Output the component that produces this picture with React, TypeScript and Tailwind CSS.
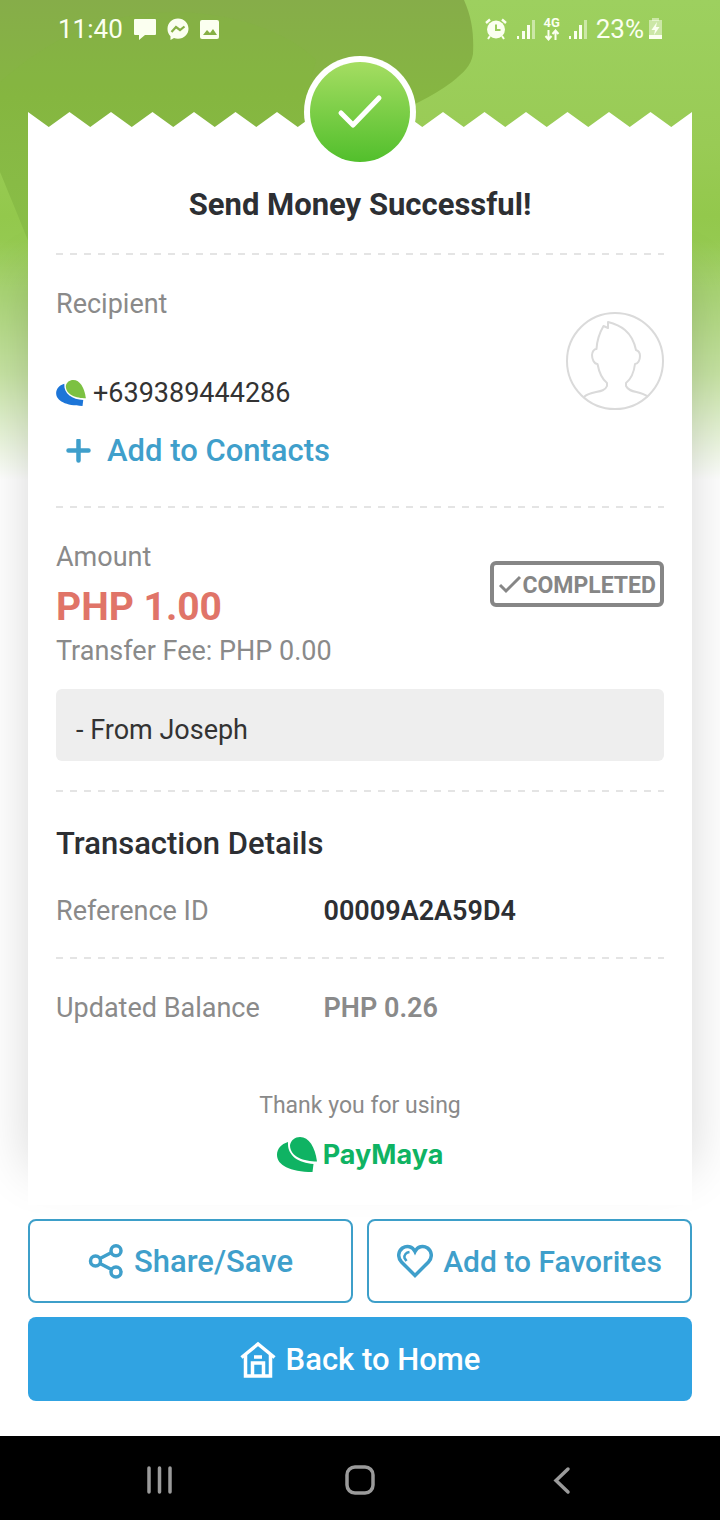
import * as React from 'react';

function Backdrop() {
  return (
    <svg
      className="absolute inset-x-0 top-0 h-[480px] w-full"
      viewBox="0 0 720 480"
      preserveAspectRatio="none"
      aria-hidden="true"
    >
      <defs>
        <linearGradient id="base" x1="0" y1="0" x2="0" y2="1">
          <stop offset="0" stopColor="#9dd05f" />
          <stop offset="0.3" stopColor="#99cb55" />
          <stop offset="0.45" stopColor="#93c84c" />
          <stop offset="0.6" stopColor="#98cc58" />
        </linearGradient>
        <linearGradient id="leaf" x1="0" y1="0" x2="0" y2="1">
          <stop offset="0" stopColor="#86ad49" />
          <stop offset="0.3" stopColor="#86b642" />
          <stop offset="1" stopColor="#8bc34a" />
        </linearGradient>
        <linearGradient id="fade" x1="0" y1="0" x2="0" y2="1">
          <stop offset="0.5" stopColor="#fff" stopOpacity="0" />
          <stop offset="0.78" stopColor="#fff" stopOpacity="0.45" />
          <stop offset="1" stopColor="#fff" />
        </linearGradient>
      </defs>
      <rect width="720" height="480" fill="url(#base)" />
      <path d="M0 0H464C472 18 474 34 473 54C471 66 464 72 452 82C430 98 410 106 392 116L340 320H60C40 270 22 225 0 172Z" fill="url(#leaf)" />
      <path d="M0 82C60 30 110 12 180 12C240 14 290 34 316 60L300 120H0Z" fill="#82b83a" opacity="0.2" />
      <rect width="720" height="480" fill="url(#fade)" />
    </svg>
  );
}

function StatusBar() {
  return (
    <header className="flex h-[58px] items-center justify-between pl-[58px] pr-[57px] text-[26px] text-[#fbfff0]">
      <div className="flex items-center gap-[10px]">
        <span>11:40</span>
        <svg width="24" height="24" viewBox="0 0 24 24" fill="currentColor" aria-hidden="true">
          <path d="M2 2h20a1 1 0 0 1 1 1v14a1 1 0 0 1-1 1H12l-6 5v-5H2a1 1 0 0 1-1-1V3a1 1 0 0 1 1-1z" />
        </svg>
        <svg width="22" height="24" viewBox="0 0 22 24" aria-hidden="true">
          <path d="M11 1.500C5 1.500 0.500 6 0.500 12c0 3 1.200 5.500 3 7.300V23l3.500-2c1.100.4 2.500.7 4 .7 6 0 10.500-4.300 10.500-9.900S17 1.500 11 1.500z" fill="currentColor" />
          <path d="M4.500 15L9 10l4 3 4.500-3.500" fill="none" stroke="#86b045" strokeWidth="2.200" />
        </svg>
        <svg width="22" height="24" viewBox="0 0 22 24" aria-hidden="true">
          <rect x="1" y="3" width="19" height="19" rx="2" fill="currentColor" />
          <path d="M4 18l4-5 3 3 3-4 4 6z" fill="#86b045" />
        </svg>
      </div>
      <div className="flex items-center gap-2">
        <svg width="24" height="24" viewBox="0 0 22 24" fill="none" aria-hidden="true">
          <path d="M1 6l4-3.500M21 6l-4-3.500" stroke="currentColor" strokeWidth="2.400" />
          <circle cx="11" cy="12.500" r="9" fill="currentColor" />
          <path d="M11 7.500v5.500h4.500" stroke="#9bcd5d" strokeWidth="2" />
          <path d="M5 19l-2 3M17 19l2 3" stroke="currentColor" strokeWidth="2" />
        </svg>
        <SignalBars />
        <span className="flex w-[16px] flex-col items-center">
          <span className="text-[13px] font-bold leading-[12px]">4G</span>
          <svg width="16" height="12" viewBox="0 0 16 12" fill="none" stroke="currentColor" strokeWidth="2" aria-hidden="true">
            <path d="M4.500 1v9M1.500 7l3 3.500 3-3.500M11.500 11V2M8.500 5l3-3.500 3 3.500" />
          </svg>
        </span>
        <SignalBars />
        <span className="flex items-center gap-1">
          23%
          <svg width="15" height="24" viewBox="0 0 15 24" aria-hidden="true">
            <rect x="4" y="1" width="7" height="3" fill="currentColor" opacity="0.5" />
            <rect x="1" y="3" width="13" height="19" fill="currentColor" opacity="0.5" />
            <rect x="1" y="18" width="13" height="4" fill="currentColor" />
            <path d="M9 5l-5.500 8H7l-1 5 5.500-8H8z" fill="currentColor" />
          </svg>
        </span>
      </div>
    </header>
  );
}

function SignalBars() {
  return (
    <svg width="20" height="24" viewBox="0 0 20 24" fill="currentColor" aria-hidden="true">
      <rect x="1" y="19" width="2" height="3" />
      <rect x="6" y="14" width="3" height="8" />
      <rect x="11" y="8" width="3" height="14" />
      <rect x="16" y="3" width="3" height="19" opacity="0.5" />
    </svg>
  );
}

function SuccessBadge() {
  return (
    <svg
      className="absolute left-1/2 -top-14 -translate-x-1/2"
      width="112"
      height="112"
      viewBox="0 0 112 112"
      role="img"
      aria-label="Success"
    >
      <defs>
        <linearGradient id="badge" x1="0" y1="0" x2="0" y2="1">
          <stop offset="0" stopColor="#a5dd62" />
          <stop offset="1" stopColor="#52bf2c" />
        </linearGradient>
      </defs>
      <circle cx="56" cy="56" r="56" fill="#fff" />
      <circle cx="56" cy="56" r="50" fill="url(#badge)" />
      <path d="M37 57l12 12 26-27" fill="none" stroke="#fff" strokeWidth="5" strokeLinecap="round" strokeLinejoin="round" />
    </svg>
  );
}

// Torn paper edge, 16 teeth wide
function TornEdge() {
  const teeth = Array.from({ length: 16 }, (_, i) => `L${i * 10 + 5} 15L${i * 10 + 10} 0`).join('');
  return (
    <svg className="block h-[15px] w-full" viewBox="0 0 160 15" preserveAspectRatio="none" aria-hidden="true">
      <path d={`M0 0${teeth}V16H0Z`} fill="#fff" />
    </svg>
  );
}

function Divider() {
  return (
    <div className="h-[2px] bg-[repeating-linear-gradient(90deg,#e4e4e4_0px,#e4e4e4_7px,transparent_7px,transparent_14px)]" />
  );
}

function Leaf({ back, front, className }: { back: string; front: string; className: string }) {
  return (
    <svg className={className} viewBox="0 0 40 35" aria-hidden="true">
      <path d="M11 5C4 7 0 12 0 18c0 10 13 17 35.500 17l1-8C22 26 10 19 11 5z" fill={back} />
      <path d="M13 8C14 3 18 0 23 0c9 0 15 10 17 24.500C27 24.500 13 20 13 8z" fill={front} />
    </svg>
  );
}

function Avatar() {
  return (
    <svg
      className="mt-[26px] size-[98px] shrink-0"
      viewBox="0 0 98 98"
      fill="none"
      stroke="#dadada"
      strokeWidth="2"
      strokeLinejoin="round"
      role="img"
      aria-label="Recipient photo"
    >
      <circle cx="49" cy="49" r="48" />
      <path d="M18 85C25 78 38 82 41 74V71C36 67 33 60 31.500 52C28 52 26 47 26 43C26 40 28 37 30.500 37C31 28 34 20 37.500 14L42 16V10C54 13 66 19 70 38C73 39 74 41 74 44C74 48 72 52 69 52C68 60 65 67 60 71V74C64 82 74 78 82 85" />
    </svg>
  );
}

const outlineButton =
  'flex h-[84px] items-center justify-center gap-[10px] rounded-lg border-2 border-[#3d9fc9] bg-white pt-[2px] font-medium text-[#3f9fcb]';

export default function App() {
  return (
    <div className="relative flex min-h-screen flex-col bg-white font-['Roboto',sans-serif] text-[27px] leading-[36px] text-[#8a8a8a]">
      <Backdrop />
      <div className="relative flex flex-1 flex-col">
        <StatusBar />

        <main className="flex flex-1 flex-col px-7 pt-[54px]">
          <section className="relative">
            <div className="absolute inset-x-0 bottom-9 top-40 shadow-[0_0_48px_rgba(0,0,0,0.16)]" />
            <div className="relative">
              <TornEdge />
              <div className="flex flex-col bg-white px-7 pb-[33px] pt-[60px]">
                <h1 className="mb-[30px] text-center text-[31px] font-bold text-[#2d2f33]">
                  Send Money Successful!
                </h1>
                <Divider />

                <div className="flex items-start justify-between pb-[37px] pt-[31px]">
                  <div>
                    <h2>Recipient</h2>
                    <p className="mt-[53px] flex items-center gap-[7px] text-[#333]">
                      <Leaf back="#1c75d8" front="#7cc142" className="h-[26px] w-[30px]" />
                      +639389444286
                    </p>
                    <button className="mt-[22px] flex items-center gap-4 pl-[10px] text-[31px] font-medium text-[#3f9fcb]">
                      <svg width="25" height="25" viewBox="0 0 25 25" stroke="currentColor" strokeWidth="4.500" strokeLinecap="round" aria-hidden="true">
                        <path d="M12.500 1.500v20M2.500 11.500h20" />
                      </svg>
                      Add to Contacts
                    </button>
                  </div>
                  <Avatar />
                </div>
                <Divider />

                <div className="flex items-start justify-between pt-[31px]">
                  <div>
                    <h2>Amount</h2>
                    <p className="mt-2 text-[39px] font-bold leading-[48px] text-[#e07468]">PHP 1.00</p>
                    <p className="mt-[2px]">Transfer Fee: PHP 0.00</p>
                  </div>
                  <div className="mt-[22px] flex h-[46px] items-center rounded-md border-4 border-[#868686] px-1 pt-[3px] text-[23px] font-bold text-[#868686]">
                    <svg width="24" height="24" viewBox="0 0 24 24" fill="none" stroke="currentColor" strokeWidth="3" aria-hidden="true">
                      <path d="M2 11l6 6L22 3" />
                    </svg>
                    COMPLETED
                  </div>
                </div>
                <p className="mb-[29px] mt-5 rounded-md bg-[#eee] px-5 pb-[13px] pt-[23px] text-[#333]">
                  - From Joseph
                </p>
                <Divider />

                <h2 className="mb-[31px] mt-[34px] text-[31px] font-medium text-[#2d2f33]">
                  Transaction Details
                </h2>
                <dl>
                  <div className="mb-7 grid grid-cols-[44%_1fr]">
                    <dt>Reference ID</dt>
                    <dd className="font-semibold text-[#2d2f33]">00009A2A59D4</dd>
                  </div>
                  <Divider />
                  <div className="mt-[31px] grid grid-cols-[44%_1fr]">
                    <dt>Updated Balance</dt>
                    <dd className="font-semibold">PHP 0.26</dd>
                  </div>
                </dl>

                <p className="mt-[62px] text-center text-[23px]">Thank you for using</p>
                <div className="mt-[13px] flex h-[35px] items-center justify-center gap-[6px] font-['Inter',sans-serif] text-[27px] font-bold text-[#0fb363]">
                  <Leaf back="currentColor" front="currentColor" className="h-[35px] w-[40px]" />
                  PayMaya
                </div>
              </div>
            </div>
            <SuccessBadge />
          </section>

          <div className="mb-[35px] mt-[14px] grid grid-cols-2 gap-[14px] text-[31px]">
            <button className={outlineButton}>
              <svg width="36" height="36" viewBox="0 0 36 36" fill="none" stroke="currentColor" strokeWidth="3.500" aria-hidden="true">
                <circle cx="7.500" cy="17" r="5" />
                <circle cx="28" cy="6.750" r="5" />
                <circle cx="28" cy="28" r="5" />
                <path d="M12 14.500L23.500 8.500M12 19.500l11.500 6" />
              </svg>
              Share/Save
            </button>
            <button className={outlineButton}>
              <svg width="36" height="36" viewBox="0 0 36 36" fill="none" stroke="currentColor" strokeWidth="3.500" aria-hidden="true">
                <path d="M18 31.500L4.500 18C0 13 1.500 7 5.500 4C10 1 15.500 2.500 18 7.500C20.500 2.500 26 1 30.500 4C34.500 7 36 13 31.500 18Z" />
                <path d="M12.500 8C9 8.500 7 11 7.500 14l2 3" strokeWidth="2.500" />
              </svg>
              <span className="text-[30px]">Add to Favorites</span>
            </button>
            <button className="col-span-2 flex h-[84px] items-center justify-center gap-[10px] rounded-lg bg-[#30a3e2] pt-[2px] font-medium text-white">
              <svg width="36" height="38" viewBox="0 0 36 38" fill="none" stroke="currentColor" strokeWidth="3.500" aria-hidden="true">
                <path d="M1.500 16.500L18 3l16.500 13.500" />
                <path d="M5.500 14v21h25V14M12.500 35V22h11v13M14 16h8" />
              </svg>
              Back to Home
            </button>
          </div>
        </main>

        <nav className="grid h-[84px] grid-cols-3 bg-black px-[60px] pt-1 text-[#9b9b9b]">
          <button className="flex items-center justify-center" aria-label="Recent apps">
            <svg width="30" height="30" viewBox="0 0 30 30" stroke="currentColor" strokeWidth="3.500" strokeLinecap="round">
              <path d="M4 3v24M14.500 3v24M25 3v24" />
            </svg>
          </button>
          <button className="flex items-center justify-center" aria-label="Home">
            <svg width="30" height="30" viewBox="0 0 30 30" fill="none" stroke="currentColor" strokeWidth="3.500">
              <rect x="2" y="2" width="26" height="26" rx="8" />
            </svg>
          </button>
          <button className="flex items-center justify-center" aria-label="Back">
            <svg width="30" height="30" viewBox="0 0 30 30" fill="none" stroke="currentColor" strokeWidth="3.500" strokeLinecap="round">
              <path d="M23 4L11 15.500 23 27" />
            </svg>
          </button>
        </nav>
      </div>
    </div>
  );
}
